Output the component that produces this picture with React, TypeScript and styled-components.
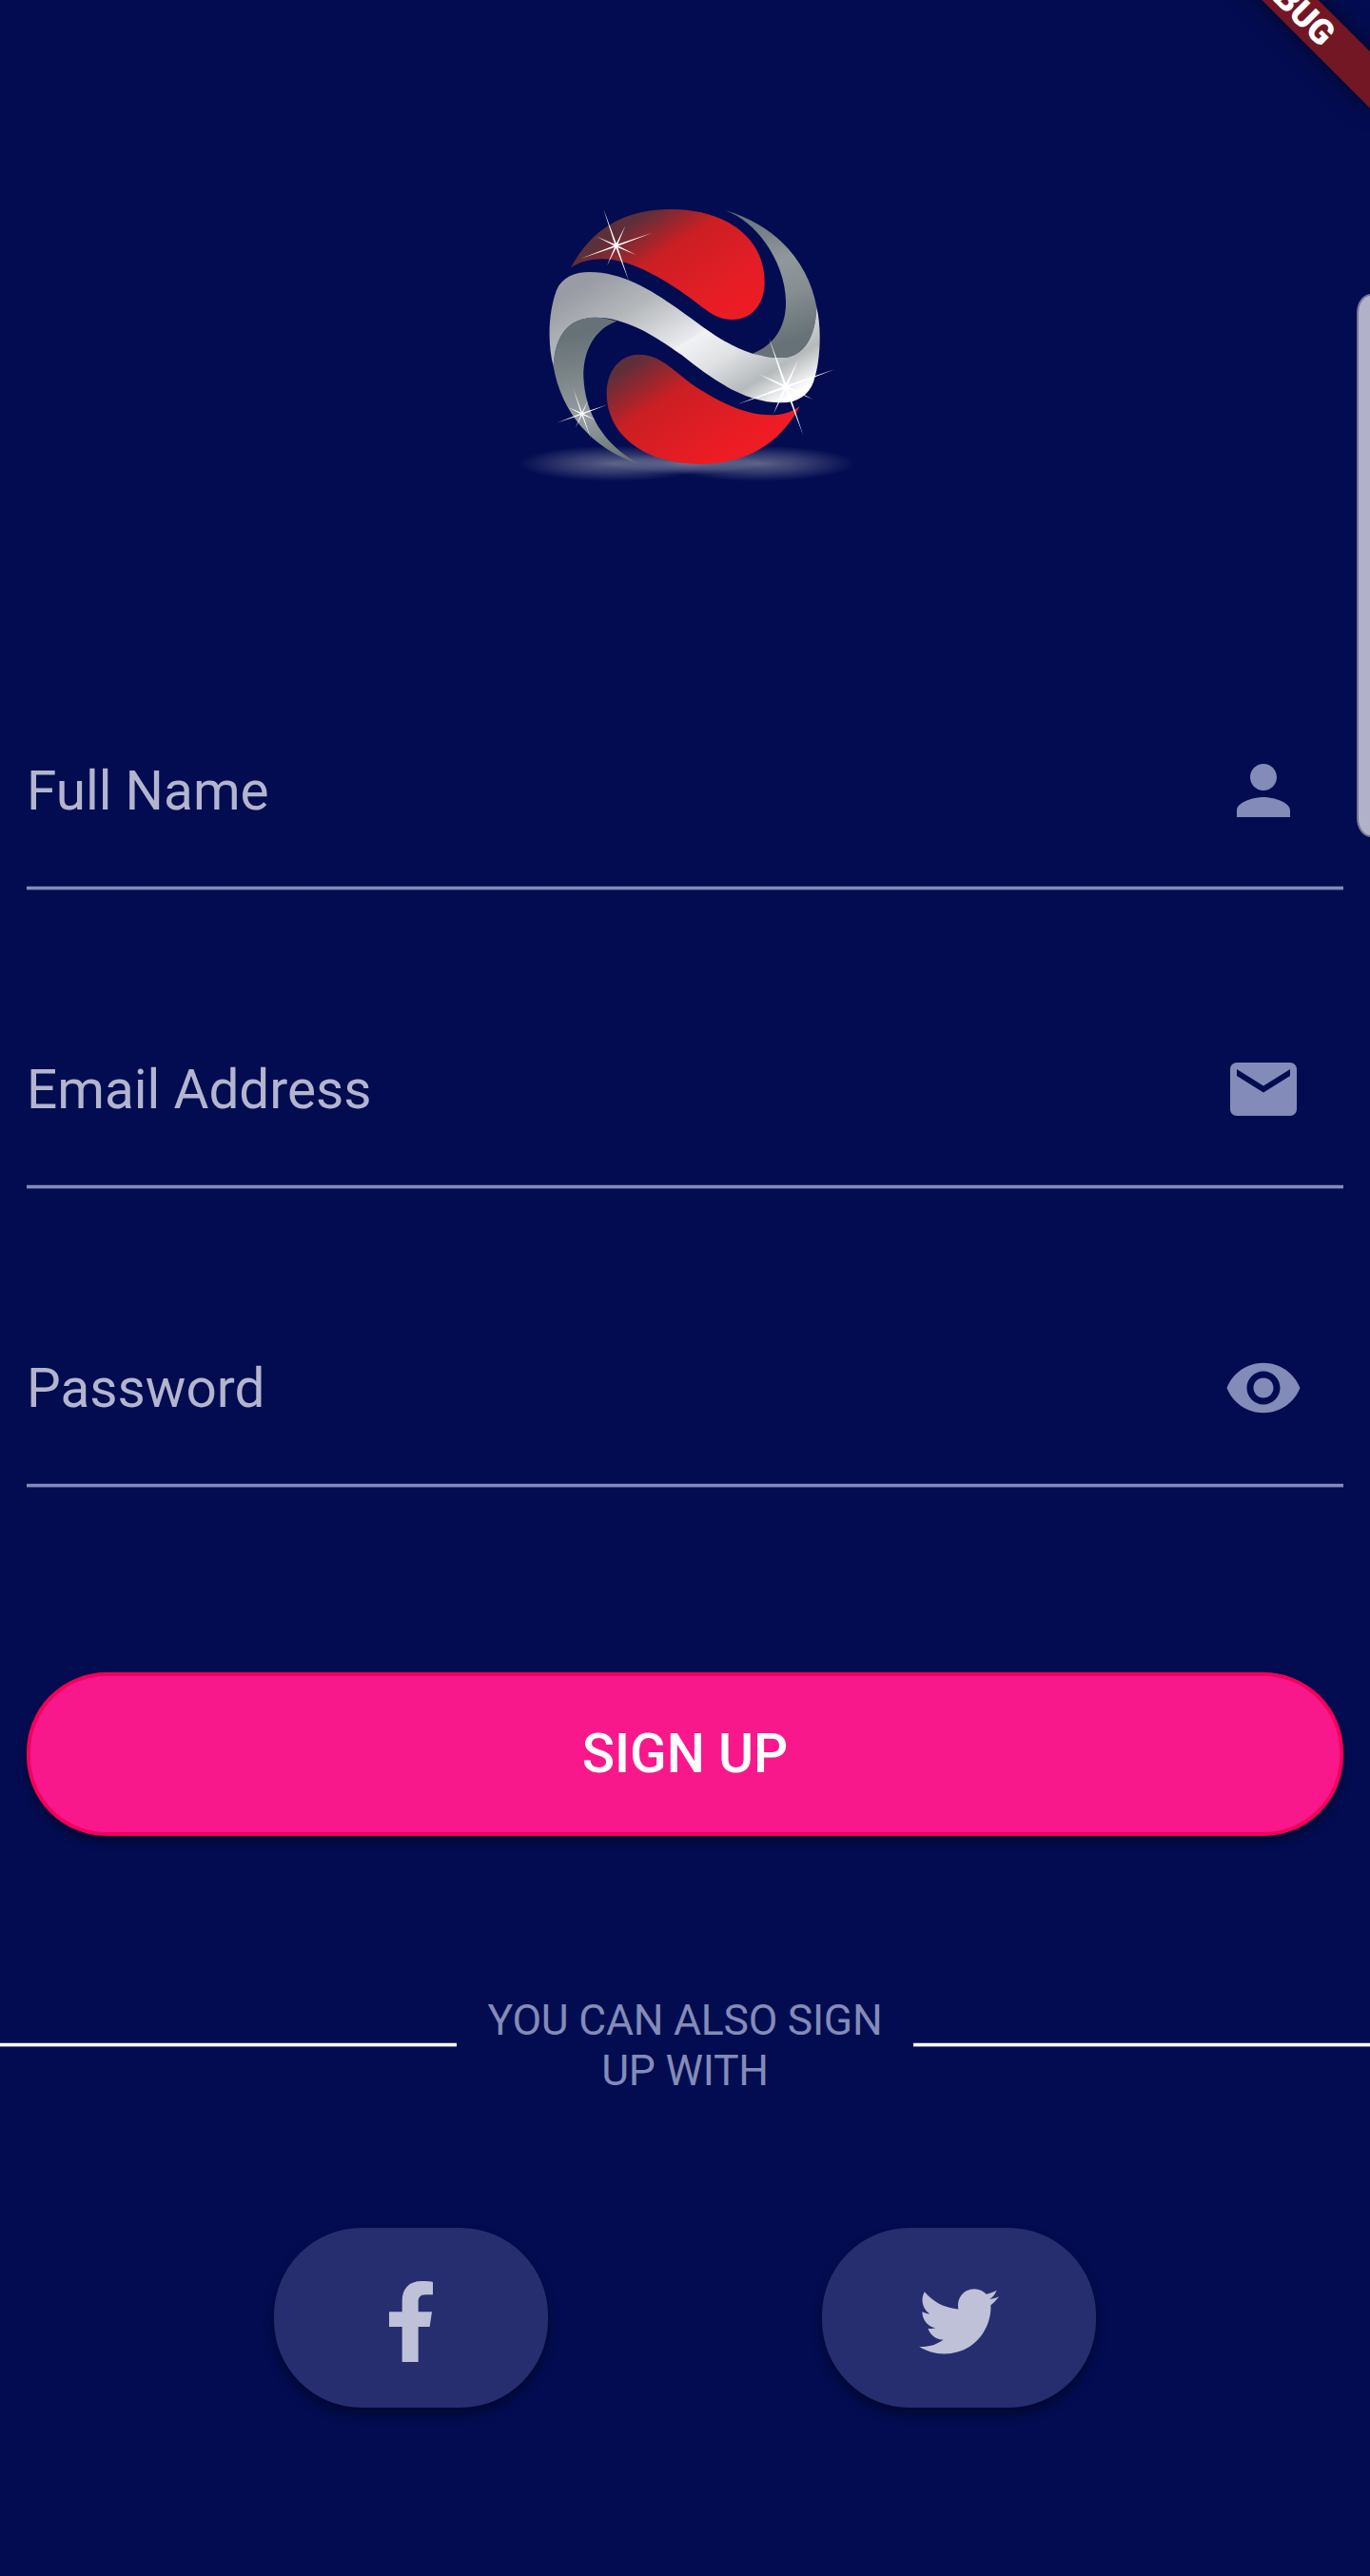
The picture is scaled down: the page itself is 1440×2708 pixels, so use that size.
import React from 'react';
import styled, { createGlobalStyle } from 'styled-components';

const Global = createGlobalStyle`
  html, body { margin: 0; background: #030c50; }
  body { font-family: Roboto, "Noto Sans", sans-serif; }
  *, *::before, *::after { box-sizing: border-box; }
`;

const Screen = styled.main`
  position: relative;
  display: flex;
  flex-direction: column;
  width: 1440px;
  height: 2708px;
  padding-top: 200px;
  overflow: hidden;
  background: #030c50;
`;

const Ribbon = styled.div`
  position: absolute;
  top: -21px;
  left: 1216px;
  width: 280px;
  height: 42px;
  transform: rotate(45deg);
  background: #731725;
  box-shadow: 0 0 24px rgba(0, 0, 0, 0.5);
  color: #fff;
  font-size: 36.5px;
  font-weight: 900;
  line-height: 43px;
  text-align: center;
`;

const EdgeHandle = styled.div`
  position: absolute;
  top: 309px;
  right: -18px;
  width: 32px;
  height: 571px;
  border: 2px solid #74769a;
  border-radius: 15px / 20px;
  background: #b1b2c9;
`;

const LogoArt = styled.svg`
  display: block;
  align-self: center;
  width: 380px;
  height: 320px;
`;

const Form = styled.form`
  display: flex;
  flex-direction: column;
  margin: 102px 28px 0;
`;

const Field = styled.label`
  display: flex;
  align-items: flex-end;
  justify-content: space-between;
  height: 314px;
  padding: 0 42px 63px 0;
  background: linear-gradient(
      to bottom,
      rgba(131, 139, 184, 0.2) 1px,
      #838bb8 1px 4px,
      rgba(131, 139, 184, 0.4) 4px
    )
    bottom / 100% 5px no-repeat;
`;

const FieldText = styled.span`
  color: #b3b5cf;
  font-size: 56.7px;
  line-height: 82px;
`;

const FieldIcon = styled.svg`
  width: 84px;
  height: 84px;
  fill: #838bb8;
`;

const SignUp = styled.button`
  height: 172px;
  margin-top: 194px;
  padding: 0 0 1px;
  border: 4px solid #f3005d;
  border-radius: 84px;
  background: #f8188b;
  box-shadow: 0 7px 10px rgba(0, 0, 0, 0.35);
  color: #fff;
  font: 500 56.7px/66px Roboto, sans-serif;
`;

const Separator = styled.div`
  display: flex;
  align-items: center;
  margin-top: 165px;
`;

const Rule = styled.span`
  flex: none;
  width: 480px;
  height: 5px;
  background: linear-gradient(
    to bottom,
    rgba(255, 255, 255, 0.25) 1px,
    #fff 1px 4px,
    rgba(255, 255, 255, 0.4) 4px
  );
`;

const SeparatorText = styled.p`
  flex: none;
  width: 480px;
  margin: 0;
  padding: 3px 28px 0;
  color: #838bb8;
  font-size: 44.5px;
  letter-spacing: -0.25px;
  line-height: 53px;
  text-align: center;
`;

const SocialRow = styled.div`
  display: flex;
  justify-content: space-between;
  margin: 138px 288px 0;
`;

const SocialButton = styled.button`
  display: flex;
  width: 288px;
  height: 189px;
  padding: 0;
  border: 0;
  border-radius: 92px;
  background: #262e70;
  box-shadow: 0 7px 12px rgba(0, 0, 0, 0.38);
`;

const SocialGlyph = styled.svg`
  width: 288px;
  height: 189px;
  fill: #bfc1d8;
`;

const rays: [number, number, number][] = [
  [-40, -116, 3],
  [41, 114, 3],
  [-113, 41, 3],
  [114, -41, 3],
  [29, -63, 3],
  [-29, 63, 3],
  [-62, -29, 3],
  [63, 29, 3],
];

function Sparkle({ x, y, size }: { x: number; y: number; size: number }) {
  return (
    <g transform={`translate(${x} ${y}) scale(${size})`} fill="#fff">
      {rays.map(([dx, dy, w]) => {
        const len = Math.hypot(dx, dy);
        const nx = (-dy / len) * w;
        const ny = (dx / len) * w;
        return <polygon key={`${dx}${dy}`} points={`${nx},${ny} ${dx},${dy} ${-nx},${-ny}`} />;
      })}
      <circle r="7" />
    </g>
  );
}

function Logo() {
  return (
    <LogoArt viewBox="0 0 1140 960" role="img" aria-label="Logo">
      <defs>
        <linearGradient id="redTop" gradientUnits="userSpaceOnUse" x1="430" y1="80" x2="679" y2="449">
          <stop offset="0" stopColor="#5c2f3b" />
          <stop offset="0.31" stopColor="#cb1f24" />
          <stop offset="0.75" stopColor="#e51d25" />
          <stop offset="1" stopColor="#ee1c24" />
        </linearGradient>
        <linearGradient id="redBottom" gradientUnits="userSpaceOnUse" x1="390" y1="550" x2="619" y2="889">
          <stop offset="0" stopColor="#5c2f3b" />
          <stop offset="0.38" stopColor="#cb1f24" />
          <stop offset="1" stopColor="#ee1c24" />
        </linearGradient>
        <linearGradient id="silver" gradientUnits="userSpaceOnUse" x1="250" y1="300" x2="583" y2="850">
          <stop offset="0" stopColor="#999ca4" />
          <stop offset="0.22" stopColor="#b4b7ba" />
          <stop offset="0.49" stopColor="#e9eaed" />
          <stop offset="0.5" stopColor="#f1f2f5" />
          <stop offset="0.66" stopColor="#dfe1e3" />
          <stop offset="0.84" stopColor="#b5babc" />
          <stop offset="0.99" stopColor="#ffffff" />
        </linearGradient>
        <linearGradient id="tailRight" gradientUnits="userSpaceOnUse" x1="740" y1="80" x2="860" y2="490">
          <stop offset="0" stopColor="#667377" />
          <stop offset="0.4" stopColor="#91989b" />
          <stop offset="0.65" stopColor="#858e91" />
          <stop offset="1" stopColor="#667277" />
        </linearGradient>
        <linearGradient id="tailLeft" gradientUnits="userSpaceOnUse" x1="280" y1="440" x2="380" y2="850">
          <stop offset="0" stopColor="#667277" />
          <stop offset="0.35" stopColor="#80898c" />
          <stop offset="0.62" stopColor="#999fa1" />
          <stop offset="1" stopColor="#667377" />
        </linearGradient>
        <radialGradient id="glow">
          <stop offset="0" stopColor="#8b8fa0" stopOpacity="0.66" />
          <stop offset="0.5" stopColor="#8084a0" stopOpacity="0.38" />
          <stop offset="1" stopColor="#8084a4" stopOpacity="0" />
        </radialGradient>
      </defs>
      <ellipse cx="345" cy="862" rx="300" ry="56" fill="url(#glow)" />
      <ellipse cx="805" cy="862" rx="300" ry="56" fill="url(#glow)" />
      <ellipse cx="575" cy="862" rx="250" ry="34" fill="url(#glow)" />
      <path
        fill="url(#redTop)"
        d="M210 244C260 150 350 60 525 60C700 60 821 150 821 290C821 360 780 407 720 408C670 408 640 380 600 350C520 290 405 217 310 217C270 217 240 225 210 244Z"
      />
      <path
        fill="url(#redBottom)"
        d="M323 640C323 570 365 518 425 518C500 518 540 580 620 630C700 680 770 709 840 709C880 709 905 700 932 681C870 800 760 864 620 864C440 864 323 770 323 640Z"
      />
      <path
        fill="url(#tailRight)"
        d="M697 64C860 110 960 230 985 368C983 460 945 526 880 528C840 528 810 524 783 515C850 490 890 430 888 350C886 230 800 100 697 64Z"
      />
      <path
        fill="url(#tailLeft)"
        d="M155 555C160 455 205 402 285 401C310 401 335 406 355 413C290 435 248 500 250 590C255 700 310 800 425 863C275 815 180 700 155 555Z"
      />
      <path
        fill="url(#silver)"
        d="M155 555C135 480 140 380 165 315C182 275 220 258 270 258C370 258 460 312 545 372C640 440 700 490 783 515C830 527 850 528 880 528C945 526 983 460 985 368C1002 440 997 540 975 605C960 645 925 670 875 670C760 670 660 600 560 520C470 455 380 400 285 401C205 402 160 455 155 555Z"
      />
      <Sparkle x={353} y={175} size={1} />
      <Sparkle x={888} y={620} size={1.35} />
      <Sparkle x={245} y={705} size={0.7} />
    </LogoArt>
  );
}

const fields = [
  {
    label: 'Full Name',
    icon: 'M12 12c2.210 0 4-1.790 4-4s-1.790-4-4-4-4 1.790-4 4 1.790 4 4 4zm0 2c-2.670 0-8 1.340-8 4v2h16v-2c0-2.660-5.330-4-8-4z',
  },
  {
    label: 'Email Address',
    icon: 'M20 4H4c-1.100 0-1.990.9-1.990 2L2 18c0 1.100.9 2 2 2h16c1.100 0 2-.9 2-2V6c0-1.100-.9-2-2-2zm0 4l-8 5-8-5V6l8 5 8-5v2z',
  },
  {
    label: 'Password',
    icon: 'M12 4.500C7 4.500 2.730 7.610 1 12c1.730 4.390 6 7.500 11 7.500s9.270-3.110 11-7.500c-1.730-4.390-6-7.500-11-7.500zM12 17c-2.760 0-5-2.240-5-5s2.240-5 5-5 5 2.240 5 5-2.240 5-5 5zm0-8c-1.660 0-3 1.340-3 3s1.340 3 3 3 3-1.340 3-3-1.340-3-3-3z',
  },
];

export default function App() {
  return (
    <Screen>
      <Global />
      <Logo />
      <Form>
        {fields.map((f) => (
          <Field key={f.label}>
            <FieldText>{f.label}</FieldText>
            <FieldIcon viewBox="0 0 24 24">
              <path d={f.icon} />
            </FieldIcon>
          </Field>
        ))}
        <SignUp type="button">SIGN UP</SignUp>
      </Form>
      <Separator>
        <Rule />
        <SeparatorText>YOU CAN ALSO SIGN UP WITH</SeparatorText>
        <Rule />
      </Separator>
      <SocialRow>
        <SocialButton type="button" aria-label="Facebook">
          <SocialGlyph viewBox="54 66 864 567">
            <path d="M458 489V378H417V331H458V296C458 257 481 234 519 234C535 234 549 235 555 237V277H532C514 277 509 287 509 300V331H552L545 378H509V489Z" />
          </SocialGlyph>
        </SocialButton>
        <SocialButton type="button" aria-label="Twitter">
          <SocialGlyph viewBox="72 66 864 567">
            <path
              transform="translate(378 235) scale(0.4922)"
              d="M459.370 151.716c.325 4.548.325 9.097.325 13.645 0 138.720-105.583 298.558-298.558 298.558-59.452 0-114.680-17.219-161.137-47.106 8.447.974 16.568 1.299 25.340 1.299 49.055 0 94.213-16.568 130.274-44.832-46.132-.975-84.792-31.188-98.112-72.772 6.498.974 12.995 1.624 19.818 1.624 9.421 0 18.843-1.300 27.614-3.573-48.081-9.747-84.143-51.980-84.143-102.985v-1.299c13.969 7.797 30.214 12.670 47.431 13.319-28.264-18.843-46.781-51.005-46.781-87.391 0-19.492 5.197-37.360 14.294-52.954 51.655 63.675 129.300 105.258 216.365 109.807-1.624-7.797-2.599-15.918-2.599-24.040 0-57.828 46.782-104.934 104.934-104.934 30.213 0 57.502 12.670 76.670 33.137 23.715-4.548 46.456-13.320 66.599-25.340-7.798 24.366-24.366 44.833-46.132 57.827 21.117-2.273 41.584-8.122 60.426-16.243-14.292 20.791-32.161 39.308-52.628 54.253z"
            />
          </SocialGlyph>
        </SocialButton>
      </SocialRow>
      <Ribbon>DEBUG</Ribbon>
      <EdgeHandle />
    </Screen>
  );
}
